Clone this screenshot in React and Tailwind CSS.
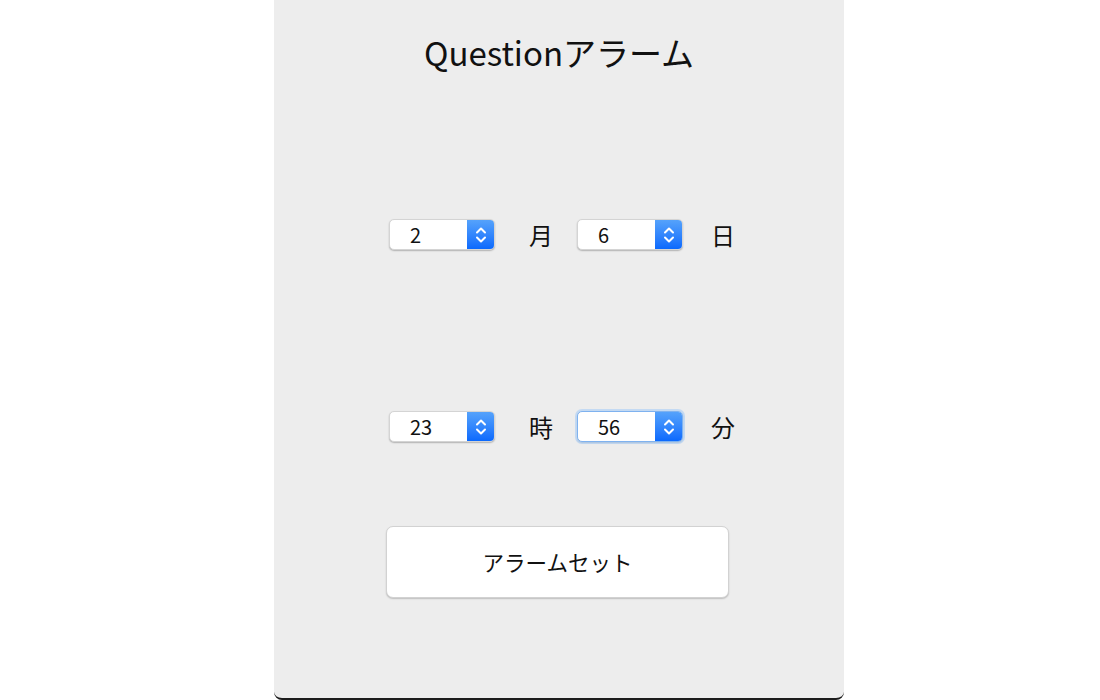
import React from 'react'

const font = { fontFamily: '"Noto Sans CJK JP", "Noto Sans", sans-serif' }

const Stepper = ({ value, focused }) => (
  <div
    className={`flex h-[31px] w-[106px] overflow-hidden rounded-[5px] bg-white shadow-[0_1px_1.5px_rgba(0,0,0,0.25)] ${
      focused ? 'border border-[#7fb2ef] ring-2 ring-[#a9cdf7]/60' : 'border border-[#d4d4d4]'
    }`}
  >
    <div className="flex flex-1 items-center pl-[20px] text-[20px] text-[#111]">{value}</div>
    <div className="flex w-[27px] items-center justify-center bg-gradient-to-b from-[#55a2fb] to-[#0a69fd]">
      <svg width="12" height="20" viewBox="0 0 12 20" fill="none" stroke="white" strokeWidth="2" strokeLinecap="round" strokeLinejoin="round">
        <path d="M2 7.5 6 3.5 10 7.5" />
        <path d="M2 12.5 6 16.5 10 12.5" />
      </svg>
    </div>
  </div>
)

const Row = ({ a, la, b, lb, focusB }) => (
  <div className="flex items-center pl-[6px]">
    <Stepper value={a} />
    <span className="ml-[34px] w-[24px] text-[24px] leading-none text-[#111]">{la}</span>
    <span className="ml-[24px]">
      <Stepper value={b} focused={focusB} />
    </span>
    <span className="ml-[28px] text-[24px] leading-none text-[#111]">{lb}</span>
  </div>
)

export default function App() {
  return (
    <div className="flex h-[700px] w-full bg-white pl-[274px]" style={font}>
      <div className="flex h-[700px] w-[570px] flex-col items-center rounded-b-[8px] border-b-[2px] border-[#1c1c1c] bg-[#ededed]">
        <h1 className="mt-[30px] h-[44px] text-[33px] leading-[44px] text-[#111]">Questionアラーム</h1>
        <div className="mt-[145px]">
          <Row a="2" la="月" b="6" lb="日" />
        </div>
        <div className="mt-[161px]">
          <Row a="23" la="時" b="56" lb="分" focusB />
        </div>
        <button className="mt-[84px] mr-[3px] h-[72px] w-[343px] rounded-[7px] border border-[#d2d2d2] bg-white text-[21.5px] text-[#111] shadow-[0_1px_1.5px_rgba(0,0,0,0.2)]">
          アラームセット
        </button>
      </div>
    </div>
  )
}
